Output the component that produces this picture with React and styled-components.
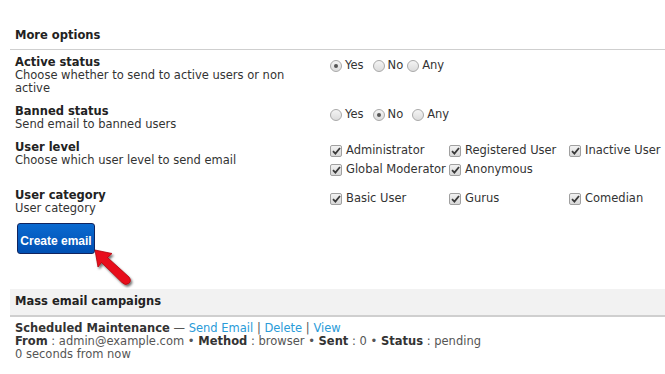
import React from "react";
import styled, { createGlobalStyle } from "styled-components";

const GlobalStyle = createGlobalStyle`
  body {
    margin: 0;
    background: #fff;
    font-family: "DejaVu Sans", Verdana, sans-serif;
    font-size: 11.5px;
    line-height: 13px;
    color: #2b2b2b;
  }
`;

const Page = styled.div`
  position: relative;
  width: 665px;
  height: 374px;
  overflow: hidden;
  padding-top: 23px;
  box-sizing: border-box;
`;

const Section = styled.div`
  margin-left: 10px;
`;

const SectionHeader = styled.h3`
  margin: 0;
  padding: 6px 5px 7px;
  font-size: 11.5px;
  line-height: 13px;
  font-weight: bold;
  color: #222;
  background: ${(p) => (p.$shaded ? "#f2f2f2" : "transparent")};
  border-bottom: ${(p) => (p.$shaded ? "2px solid #cfcfcf" : "1px solid #cfcfcf")};
`;

const Form = styled.div`
  padding: 6px 0 0 5px;
`;

const Row = styled.div`
  display: flex;
  margin-bottom: 10px;
`;

const Term = styled.div`
  width: 315px;
  flex-shrink: 0;
`;

const Label = styled.div`
  font-weight: bold;
  color: #222;
`;

const Desc = styled.div`
  color: #333;
  padding-right: 25px;
`;

const RadioGroup = styled.div`
  display: flex;
  align-items: center;
  height: 19px;
`;

const Option = styled.label`
  display: flex;
  align-items: center;
  height: 19px;
  margin-right: ${(p) => p.$gap || 0}px;
  white-space: nowrap;
  color: #333;
`;

const RadioMark = styled.span`
  box-sizing: border-box;
  width: 12px;
  height: 12px;
  border-radius: 50%;
  border: 1px solid #a9a9a9;
  background: linear-gradient(#f4f4f4, #dcdcdc);
  margin-right: 3px;
  display: flex;
  align-items: center;
  justify-content: center;
  &::after {
    content: "";
    display: ${(p) => (p.$on ? "block" : "none")};
    width: 4px;
    height: 4px;
    border-radius: 50%;
    background: #555;
  }
`;

const CheckGrid = styled.div`
  display: grid;
  grid-template-columns: 119px 120px 100px;
`;

const CheckBox = styled.span`
  box-sizing: border-box;
  width: 12px;
  height: 12px;
  border: 1px solid #a0a0a0;
  border-radius: 2px;
  background: linear-gradient(#f2f2f2, #d8d8d8);
  margin-right: 4px;
  display: flex;
  align-items: center;
  justify-content: center;
`;

const Button = styled.button`
  margin: -2px 0 0 2px;
  width: 78px;
  height: 31px;
  border: 1px solid #11245e;
  border-radius: 3px;
  background: linear-gradient(#0a6ad0, #0050b3);
  color: #fff;
  font-family: "Liberation Sans", Arial, sans-serif;
  font-weight: bold;
  font-size: 12px;
  padding: 4px 0 0;
  cursor: pointer;
`;

const ButtonArea = styled.div`
  height: 64px;
`;

const Campaign = styled.div`
  padding: 5px 5px 0;
  color: #555;
`;

const Strong = styled.b`
  color: #333;
`;

const Link = styled.a`
  color: #2a9bd8;
  text-decoration: none;
`;

const Sep = styled.span`
  color: #555;
`;

const Arrow = styled.svg`
  position: absolute;
  left: 90px;
  top: 245px;
`;

const Check = () => (
  <CheckBox>
    <svg width="9" height="8" viewBox="0 0 9 8">
      <path d="M1 4.2 L3.4 6.6 L8 1" fill="none" stroke="#3a3a3a" strokeWidth="1.8" />
    </svg>
  </CheckBox>
);

const Radio = ({ on, label, gap }) => (
  <Option $gap={gap}>
    <RadioMark $on={on} />
    {label}
  </Option>
);

const CheckItem = ({ label }) => (
  <Option>
    <Check />
    {label}
  </Option>
);

export default function App() {
  return (
    <Page>
      <GlobalStyle />
      <Section>
        <SectionHeader>More options</SectionHeader>
        <Form>
          <Row>
            <Term>
              <Label>Active status</Label>
              <Desc>Choose whether to send to active users or non active</Desc>
            </Term>
            <RadioGroup>
              <Radio on label="Yes" gap={9} />
              <Radio label="No" gap={4} />
              <Radio label="Any" />
            </RadioGroup>
          </Row>
          <Row>
            <Term>
              <Label>Banned status</Label>
              <Desc>Send email to banned users</Desc>
            </Term>
            <RadioGroup>
              <Radio label="Yes" gap={9} />
              <Radio on label="No" gap={9} />
              <Radio label="Any" />
            </RadioGroup>
          </Row>
          <Row>
            <Term>
              <Label>User level</Label>
              <Desc>Choose which user level to send email</Desc>
            </Term>
            <CheckGrid>
              <CheckItem label="Administrator" />
              <CheckItem label="Registered User" />
              <CheckItem label="Inactive User" />
              <CheckItem label="Global Moderator" />
              <CheckItem label="Anonymous" />
            </CheckGrid>
          </Row>
          <Row>
            <Term>
              <Label>User category</Label>
              <Desc>User category</Desc>
            </Term>
            <CheckGrid>
              <CheckItem label="Basic User" />
              <CheckItem label="Gurus" />
              <CheckItem label="Comedian" />
            </CheckGrid>
          </Row>
          <ButtonArea>
            <Button>Create email</Button>
          </ButtonArea>
        </Form>
      </Section>
      <Section>
        <SectionHeader $shaded>Mass email campaigns</SectionHeader>
        <Campaign>
          <div>
            <Strong>Scheduled Maintenance</Strong> — <Link href="#">Send Email</Link>{" "}
            <Sep>|</Sep> <Link href="#">Delete</Link> <Sep>|</Sep> <Link href="#">View</Link>
          </div>
          <div>
            <Strong>From</Strong> : admin@example.com • <Strong>Method</Strong> : browser •{" "}
            <Strong>Sent</Strong> : 0 • <Strong>Status</Strong> : pending
          </div>
          <div>0 seconds from now</div>
        </Campaign>
      </Section>
      <Arrow width="50" height="45" viewBox="0 0 50 45">
        <defs>
          <filter id="sh" x="-20%" y="-20%" width="150%" height="150%">
            <feDropShadow dx="1.5" dy="2" stdDeviation="1.2" floodColor="#000" floodOpacity="0.55" />
          </filter>
        </defs>
        <path
          d="M5 5 L22 8.5 L17.5 12.5 L39 32 Q42 36 38.5 38.5 Q35.5 41 32 37.5 L11.5 17.5 L8 22 Z"
          fill="#e8101a"
          stroke="#b0000a"
          strokeWidth="0.8"
          strokeLinejoin="round"
          filter="url(#sh)"
        />
      </Arrow>
    </Page>
  );
}
